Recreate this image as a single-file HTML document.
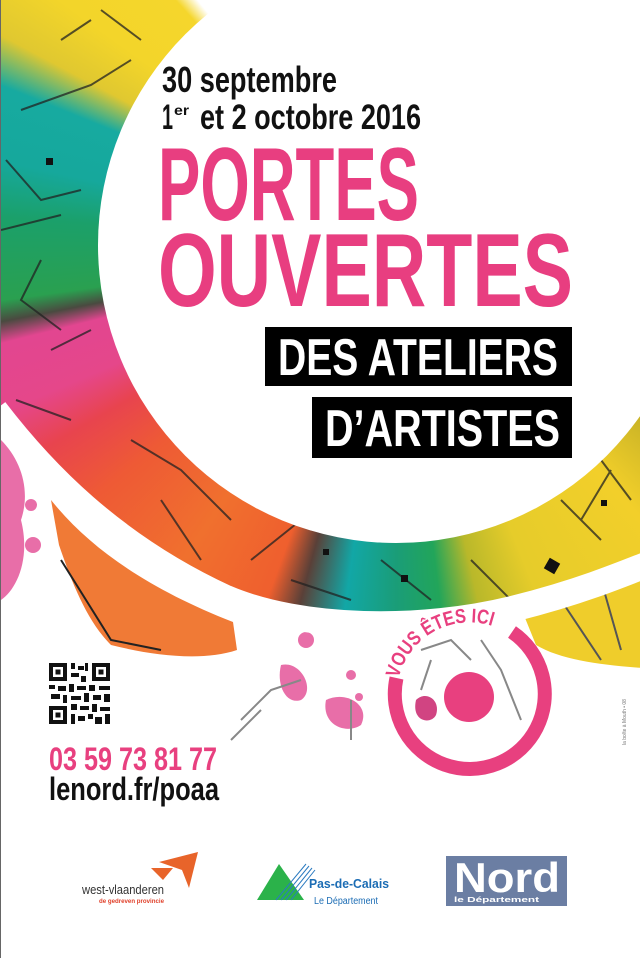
<!DOCTYPE html>
<html><head><meta charset="utf-8">
<style>
html,body{margin:0;padding:0;background:#fff;}
#p{position:relative;width:640px;height:958px;overflow:hidden;background:#fff;border-left:1px solid #666;box-sizing:border-box;}
#ring{position:absolute;left:0;top:0;width:640px;height:958px;
background:conic-gradient(from 0deg at 395px 245px,#fff 0deg,#fff 117deg,#3b3a22 120deg,#c9b326 125deg,#f2cf2a 138deg,#e6cc2a 158deg,#b9b82a 167deg,#22a55a 173deg,#1a9d78 180deg,#12a7a6 188deg,#5a4038 195deg,#ef5f2e 200deg,#f0702e 214deg,#ee5a35 230deg,#e8444e 240deg,#e5478a 247deg,#e24690 256deg,#4a4a40 259deg,#2aa050 262deg,#1ba06a 274deg,#16a89c 282deg,#17aaa0 292deg,#e0c830 298deg,#f3d52a 306deg,#f5d62c 318deg,#fff 321deg,#fff 360deg);}
svg{position:absolute;left:0;top:0;}
</style></head><body><div id="p">
<div id="ring"></div>
<svg width="640" height="958" viewBox="0 0 640 958">
<g stroke="#222" stroke-width="2" fill="none" opacity="0.75">
<path d="M20 110 L90 85 L130 60 M0 230 L60 215 M40 260 L20 300 L60 330 M15 400 L70 420 M50 350 L90 330 M5 160 L40 200 L80 190"/>
<path d="M130 440 L180 470 L230 520 M160 500 L200 560 M250 560 L300 520 M290 580 L350 600 M380 560 L430 600 M470 560 L520 610 M560 500 L600 540 M600 460 L630 500 M610 470 L580 520"/>
<path d="M100 10 L140 40 M60 40 L90 20"/>
</g>
<g fill="#111"><rect x="45" y="158" width="7" height="7"/><rect x="322" y="549" width="6" height="6"/><rect x="545" y="560" width="12" height="12" transform="rotate(30 551 566)"/><rect x="400" y="575" width="7" height="7"/><rect x="600" y="500" width="6" height="6"/><rect x="95" y="516" width="5" height="5"/></g>
<path d="M-10 425 C40 480 110 565 235 614 C300 637 420 634 520 608 C580 592 620 577 660 562 L660 960 L-10 960 Z" fill="#fff"/>
<path d="M50 500 C90 550 150 590 232 622 L236 650 C200 662 150 655 110 645 C85 620 70 580 58 545 Z" fill="#f07a36"/>
<path d="M60 560 L110 640 L160 650" fill="none" stroke="#222" stroke-width="2"/>
<path d="M520 608 C570 594 610 580 642 568 L642 668 C600 665 560 660 535 645 Z" fill="#efcd2b"/>
<path d="M560 600 L600 660 M600 580 L620 650" stroke="#555" stroke-width="2"/>
<g fill="#e5559a" opacity="0.85">
<path d="M0 440 C20 460 30 490 20 520 C30 560 15 590 0 600 Z"/>
<circle cx="32" cy="545" r="8"/><circle cx="30" cy="505" r="6"/>
<path d="M280 665 C300 660 315 690 300 700 C285 705 275 685 280 665 Z"/>
<path d="M325 700 C345 690 370 705 360 725 C345 735 320 725 325 700 Z"/>
<circle cx="305" cy="640" r="8"/><circle cx="350" cy="675" r="5"/><circle cx="358" cy="697" r="4"/>
<path d="M415 700 C425 690 440 700 435 715 C430 725 410 722 415 700 Z" fill="#c9236c"/>
</g>
<g stroke="#888" stroke-width="2" fill="none">
<path d="M240 720 L270 690 L300 680 M350 700 L350 740 M230 740 L260 710"/>
<path d="M420 650 L450 640 L470 660 M480 640 L500 670 L520 720 M430 660 L420 690"/>
</g>
<path d="M-6 410 C40 470 110 545 225 598 C300 630 420 632 515 608 C575 593 615 577 660 559" fill="none" stroke="#fff" stroke-width="26"/>
<circle cx="395" cy="245" r="298" fill="#fff"/>
<g font-family="'Liberation Sans Narrow','Liberation Sans',sans-serif" fill="#111" font-weight="bold">
<text x="161" y="92" font-size="36" textLength="175" lengthAdjust="spacingAndGlyphs">30 septembre</text>
<text x="161" y="129" font-size="35" textLength="11" lengthAdjust="spacingAndGlyphs">1</text>
<text x="173" y="115" font-size="14" textLength="15" lengthAdjust="spacingAndGlyphs">er</text>
<text x="199" y="129" font-size="35" textLength="221" lengthAdjust="spacingAndGlyphs">et 2 octobre 2016</text>
</g>
<g font-family="'Liberation Sans Narrow','Liberation Sans',sans-serif" fill="#e83e80" font-weight="bold">
<text x="157" y="220" font-size="104" textLength="261" lengthAdjust="spacingAndGlyphs">PORTES</text>
<text x="157" y="306" font-size="104" textLength="415" lengthAdjust="spacingAndGlyphs">OUVERTES</text>
</g>
<rect x="264" y="327" width="307" height="59" fill="#000"/>
<rect x="311" y="397" width="260" height="61" fill="#000"/>
<g font-family="'Liberation Sans Narrow','Liberation Sans',sans-serif" fill="#fff" font-weight="bold">
<text x="277" y="375" font-size="52" textLength="280" lengthAdjust="spacingAndGlyphs">DES ATELIERS</text>
<text x="324" y="446" font-size="52" textLength="235" lengthAdjust="spacingAndGlyphs">D’ARTISTES</text>
</g>
<defs><path id="arc" d="M397.6 678.3 A73 73 0 0 1 506.5 633"/></defs>
<path d="M511 632 A75 75 0 1 1 395.5 678" fill="none" stroke="#e8407f" stroke-width="14"/>
<circle cx="468" cy="697" r="25" fill="#e8407f"/>
<text font-family="'Liberation Sans Narrow','Liberation Sans',sans-serif" font-size="20" fill="#e8407f" font-weight="bold"><textPath href="#arc" textLength="120" lengthAdjust="spacingAndGlyphs">VOUS ÊTES ICI</textPath></text>
<text x="625" y="745" font-family="'Liberation Sans',sans-serif" font-size="5" fill="#777" transform="rotate(-90 625 745)">la boîte à Mouth • 08</text>
<g fill="#111">
<rect x="48" y="663" width="61" height="61" fill="#fff"/>
<path d="M48 663h18v18h-18z M52 667v10h10v-10z M91 663h18v18h-18z M95 667v10h10v-10z M48 706h18v18h-18z M52 710v10h10v-10z" fill-rule="evenodd"/>
<rect x="54.5" y="669.5" width="5" height="5"/><rect x="97.5" y="669.5" width="5" height="5"/><rect x="54.5" y="712.5" width="5" height="5"/>
<rect x="70" y="663" width="4" height="6"/><rect x="77" y="666" width="6" height="4"/><rect x="84" y="663" width="3" height="8"/><rect x="70" y="673" width="8" height="4"/><rect x="80" y="676" width="5" height="6"/>
<rect x="48" y="685" width="6" height="4"/><rect x="57" y="686" width="8" height="5"/><rect x="68" y="684" width="5" height="8"/><rect x="76" y="686" width="9" height="4"/><rect x="88" y="685" width="6" height="6"/><rect x="98" y="686" width="11" height="4"/>
<rect x="50" y="694" width="9" height="5"/><rect x="62" y="695" width="4" height="8"/><rect x="70" y="696" width="10" height="4"/><rect x="83" y="693" width="5" height="9"/><rect x="92" y="695" width="8" height="5"/><rect x="103" y="694" width="6" height="8"/>
<rect x="70" y="704" width="6" height="6"/><rect x="79" y="706" width="9" height="4"/><rect x="91" y="704" width="5" height="8"/><rect x="99" y="707" width="10" height="4"/>
<rect x="70" y="714" width="4" height="10"/><rect x="77" y="716" width="7" height="5"/><rect x="87" y="714" width="5" height="5"/><rect x="94" y="717" width="7" height="7"/><rect x="104" y="714" width="5" height="10"/>
</g>
<g font-family="'Liberation Sans Narrow','Liberation Sans',sans-serif" font-weight="bold">
<text x="48" y="770" font-size="32" fill="#e8407f" textLength="168" lengthAdjust="spacingAndGlyphs">03 59 73 81 77</text>
<text x="48" y="800" font-size="32" fill="#111" textLength="170" lengthAdjust="spacingAndGlyphs">lenord.fr/poaa</text>
</g>
<path d="M158 862 L197 852 L188 888 L181 870 Z" fill="#e8642a"/>
<path d="M150 868 L172 868 L162 880 Z" fill="#e8642a"/>
<text x="81" y="894" font-family="'Liberation Sans',sans-serif" font-size="13" fill="#333" textLength="82" lengthAdjust="spacingAndGlyphs">west-vlaanderen</text>
<text x="98" y="903" font-family="'Liberation Sans',sans-serif" font-size="6.5" fill="#e0402a" font-weight="bold" textLength="65" lengthAdjust="spacingAndGlyphs">de gedreven provincie</text>
<path d="M256 900 L278 864 L303 900 Z" fill="#2bb24a"/>
<g stroke="#2a7ac0" stroke-width="1"><path d="M275 900 L305 864 M280 900 L308 866 M285 900 L311 868 M290 900 L314 870"/></g>
<text x="308" y="888" font-family="'Liberation Sans',sans-serif" font-size="13" font-weight="bold" fill="#1b6cb4" textLength="80" lengthAdjust="spacingAndGlyphs">Pas-de-Calais</text>
<text x="313" y="904" font-family="'Liberation Sans',sans-serif" font-size="10" fill="#1b6cb4" textLength="64" lengthAdjust="spacingAndGlyphs">Le Département</text>
<rect x="445" y="856" width="121" height="50" fill="#6b7ea3"/>
<text x="453" y="892" font-family="'Liberation Sans',sans-serif" font-size="42" font-weight="bold" fill="#fff" textLength="106" lengthAdjust="spacingAndGlyphs">Nord</text>
<text x="453" y="902" font-family="'Liberation Sans',sans-serif" font-size="7" font-weight="bold" fill="#fff" textLength="85" lengthAdjust="spacingAndGlyphs">le Département</text>
</svg>
</div></body></html>
